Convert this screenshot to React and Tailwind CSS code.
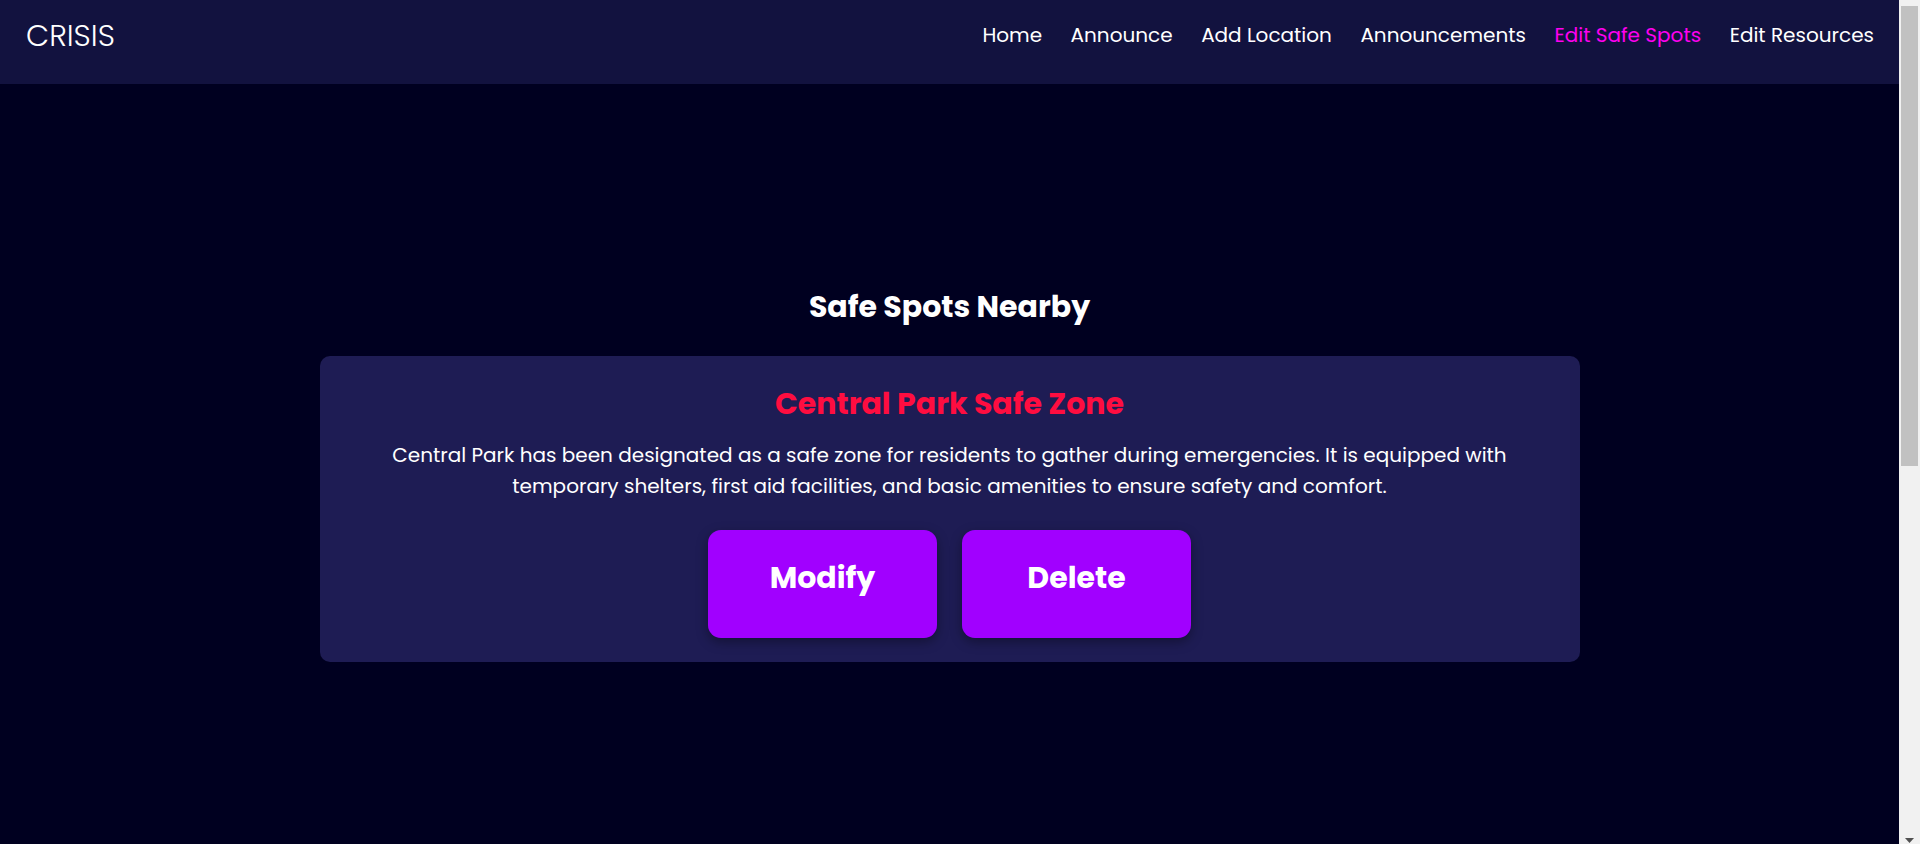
export default function App() {
  const links = ["Home", "Announce", "Add Location", "Announcements", "Edit Safe Spots", "Edit Resources"];
  return (
    <div className="h-[844px] w-full flex overflow-hidden bg-[#000020] text-white" style={{ fontFamily: "Poppins, Inter, 'Noto Sans', sans-serif" }}>
      <div className="flex-1 min-w-0 flex flex-col">
        <nav className="h-[84px] shrink-0 bg-[#12123f] flex items-center justify-between pl-[26px] pr-[25px] pb-[14px]">
          <div className="text-[30px] leading-[45px] font-light">CRISIS</div>
          <ul className="flex items-center gap-[28.5px] text-[20px] leading-[30px]">
            {links.map((l) => (
              <li key={l} className={l === "Edit Safe Spots" ? "text-[#ff00f0]" : "text-white"}>{l}</li>
            ))}
          </ul>
        </nav>
        <main className="pt-[200px] flex flex-col items-center">
          <h2 className="text-[30px] leading-[45px] font-bold mb-[27px]">Safe Spots Nearby</h2>
          <div className="w-[1260px] bg-[#1e1c54] rounded-[10px] pt-[25px] pb-[24px] px-[20px] flex flex-col items-center">
            <h3 className="text-[30px] leading-[45px] font-bold text-[#ff0d40]">Central Park Safe Zone</h3>
            <p className="mt-[14px] text-[20px] leading-[31px] text-center">
              Central Park has been designated as a safe zone for residents to gather during emergencies. It is equipped with
              <br />
              temporary shelters, first aid facilities, and basic amenities to ensure safety and comfort.
            </p>
            <div className="mt-[28px] flex gap-[25px]">
              <button className="w-[229px] h-[108px] rounded-[13px] bg-[#a100ff] pt-[25px] flex justify-center items-start text-[30px] leading-[45px] font-bold shadow-[0_4px_12px_rgba(0,0,0,0.35)]">Modify</button>
              <button className="w-[229px] h-[108px] rounded-[13px] bg-[#a100ff] pt-[25px] flex justify-center items-start text-[30px] leading-[45px] font-bold shadow-[0_4px_12px_rgba(0,0,0,0.35)]">Delete</button>
            </div>
          </div>
        </main>
      </div>
      <div className="w-[21px] shrink-0 bg-[#f1f1f1] flex flex-col items-center justify-between pt-[6px] pb-[1px]">
        <div className="w-[17px] h-[460px] bg-[#c1c1c1]" />
        <svg width="9" height="5" viewBox="0 0 9 5">
          <polygon points="0,0 9,0 4.5,5" fill="#505050" />
        </svg>
      </div>
    </div>
  );
}
